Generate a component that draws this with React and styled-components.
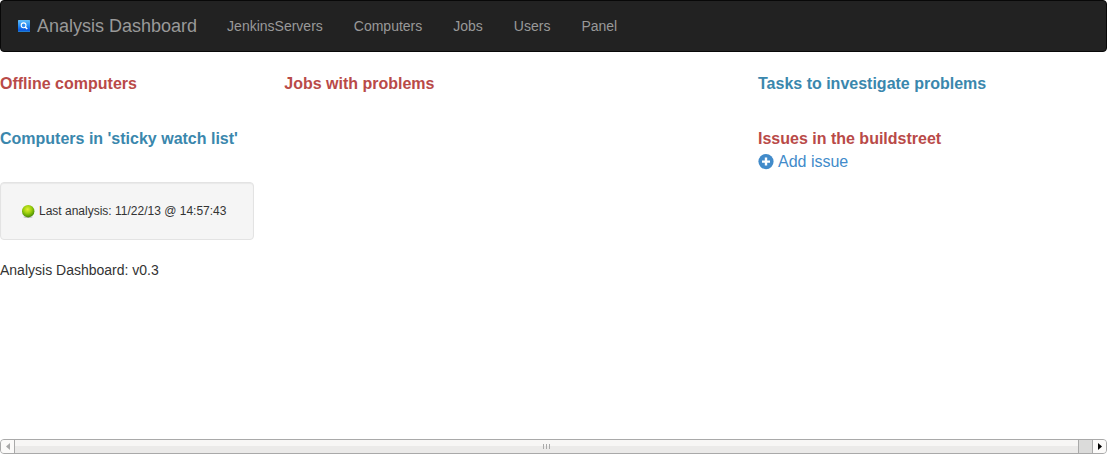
import React from "react";
import styled, { createGlobalStyle } from "styled-components";

const GlobalStyle = createGlobalStyle`
  * { box-sizing: border-box; }
  body {
    margin: 0;
    background: #fff;
    color: #333;
    font-family: "Liberation Sans", Arial, sans-serif;
    font-size: 14px;
    line-height: 20px;
  }
`;

const Page = styled.div`
  display: flex;
  flex-direction: column;
  min-height: 100vh;
  overflow: hidden;
`;

const Navbar = styled.nav`
  display: flex;
  align-items: center;
  min-height: 52px;
  margin-bottom: 20px;
  padding-left: 17px;
  background: #222;
  border: 1px solid #080808;
  border-radius: 4px;
`;

const Brand = styled.a`
  display: flex;
  align-items: center;
  gap: 7px;
  padding-right: 15px;
  color: #999;
  font-size: 18px;
  text-decoration: none;
`;

const NavList = styled.ul`
  display: flex;
  gap: 1px;
  margin: 0;
  padding: 0;
  list-style: none;
`;

const NavLink = styled.a`
  display: block;
  padding: 15px;
  color: #999;
  text-decoration: none;
`;

const Columns = styled.main`
  display: grid;
  grid-template-columns: 3fr 5fr 4fr;
  margin-right: -30px;
`;

const Column = styled.div`
  min-width: 0;
  padding-right: 30px;
`;

const Panel = styled.section`
  min-height: 55px;
  font-size: 16px;
  line-height: 23px;
`;

const Heading = styled.h2`
  margin: 0;
  color: ${({ $danger }) => ($danger ? "#b94a48" : "#3a87ad")};
  font-size: 16px;
  font-weight: bold;
`;

const AddLink = styled.a`
  display: flex;
  align-items: center;
  gap: 4px;
  width: fit-content;
  color: #428bca;
  text-decoration: none;
`;

const Well = styled.div`
  display: flex;
  align-items: center;
  gap: 4px;
  margin-bottom: 20px;
  padding: 19px 20px;
  background: #f5f5f5;
  border: 1px solid #e3e3e3;
  border-radius: 4px;
  box-shadow: inset 0 1px 1px rgba(0, 0, 0, 0.05);
  font-size: 12px;
  line-height: 18px;
  white-space: nowrap;
`;

const Icon = styled.svg`
  flex: none;
  display: block;
`;

const ScrollTrack = styled.div`
  display: flex;
  height: 15px;
  margin-top: auto;
  overflow: hidden;
  background: #dbdbda;
  border: 1px solid #a9a9a9;
  border-radius: 4px;
`;

const ScrollButton = styled.button`
  display: flex;
  align-items: center;
  justify-content: center;
  width: 13px;
  padding: 0;
  background: #fbfaf9;
  border: 0;
  color: ${({ $active }) => ($active ? "#000" : "#a9a9a9")};
`;

const ScrollThumb = styled.div`
  display: flex;
  flex: 1;
  align-items: center;
  justify-content: center;
  gap: 2px;
  margin-right: 13px;
  background: linear-gradient(#f7f6f5 50%, #ebeae9 50%);
  border: solid #a9a9a9;
  border-width: 0 1px;
`;

const Grip = styled.span`
  width: 1px;
  height: 5px;
  background: #a9a9a9;
`;

const ScrollEnd = styled(ScrollButton)`
  width: 14px;
  border-left: 1px solid #a9a9a9;
`;

const links = ["JenkinsServers", "Computers", "Jobs", "Users", "Panel"];

function BrandIcon() {
  return (
    <Icon width="12" height="12" viewBox="0 0 12 12" aria-hidden="true">
      <defs>
        <linearGradient id="brand" x1="0" y1="0" x2="0" y2="1">
          <stop offset="0" stopColor="#62bdf9" />
          <stop offset="0.5" stopColor="#238af0" />
          <stop offset="0.85" stopColor="#0753df" />
          <stop offset="1" stopColor="#2b8cc4" />
        </linearGradient>
      </defs>
      <rect width="12" height="12" rx="0.5" fill="url(#brand)" />
      <circle cx="5.6" cy="5.3" r="2.4" fill="#2f8df0" stroke="#fff" strokeWidth="1.1" />
      <path d="M7.2 7 9.2 9" stroke="#fff" strokeWidth="1.5" />
    </Icon>
  );
}

function StatusIcon() {
  return (
    <Icon width="14" height="14" viewBox="0 0 14 14" aria-hidden="true">
      <defs>
        <radialGradient id="ball" cx="0.45" cy="0.35" r="0.65">
          <stop offset="0" stopColor="#e2ee35" />
          <stop offset="0.5" stopColor="#9bcf0c" />
          <stop offset="1" stopColor="#448904" />
        </radialGradient>
      </defs>
      <ellipse cx="7" cy="13" rx="4.5" ry="1" fill="#aaa" opacity="0.7" />
      <circle cx="7.2" cy="7.2" r="6.2" fill="url(#ball)" />
    </Icon>
  );
}

function PlusIcon() {
  return (
    <Icon width="16" height="16" viewBox="0 0 16 16" aria-hidden="true">
      <circle cx="8" cy="7.6" r="7.6" fill="currentColor" />
      <path d="M8 3.6v8M4 7.6h8" stroke="#fff" strokeWidth="2.4" />
    </Icon>
  );
}

export default function App() {
  return (
    <Page>
      <GlobalStyle />
      <Navbar>
        <Brand href="#">
          <BrandIcon />
          Analysis Dashboard
        </Brand>
        <NavList>
          {links.map((name) => (
            <li key={name}>
              <NavLink href="#">{name}</NavLink>
            </li>
          ))}
        </NavList>
      </Navbar>
      <Columns>
        <Column>
          <Panel>
            <Heading $danger>Offline computers</Heading>
          </Panel>
          <Panel>
            <Heading>Computers in 'sticky watch list'</Heading>
          </Panel>
          <Well>
            <StatusIcon />
            Last analysis: 11/22/13 @ 14:57:43
          </Well>
        </Column>
        <Column>
          <Panel>
            <Heading $danger>Jobs with problems</Heading>
          </Panel>
        </Column>
        <Column>
          <Panel>
            <Heading>Tasks to investigate problems</Heading>
          </Panel>
          <Panel>
            <Heading $danger>Issues in the buildstreet</Heading>
            <AddLink href="#">
              <PlusIcon />
              Add issue
            </AddLink>
          </Panel>
        </Column>
      </Columns>
      <footer>Analysis Dashboard: v0.3</footer>
      <ScrollTrack>
        <ScrollButton type="button" aria-label="Scroll left">
          <Icon width="4" height="7" viewBox="0 0 4 7">
            <path d="M4 0v7L0 3.5z" fill="currentColor" />
          </Icon>
        </ScrollButton>
        <ScrollThumb>
          <Grip />
          <Grip />
          <Grip />
        </ScrollThumb>
        <ScrollEnd $active type="button" aria-label="Scroll right">
          <Icon width="4" height="7" viewBox="0 0 4 7">
            <path d="M0 0v7L4 3.5z" fill="currentColor" />
          </Icon>
        </ScrollEnd>
      </ScrollTrack>
    </Page>
  );
}
